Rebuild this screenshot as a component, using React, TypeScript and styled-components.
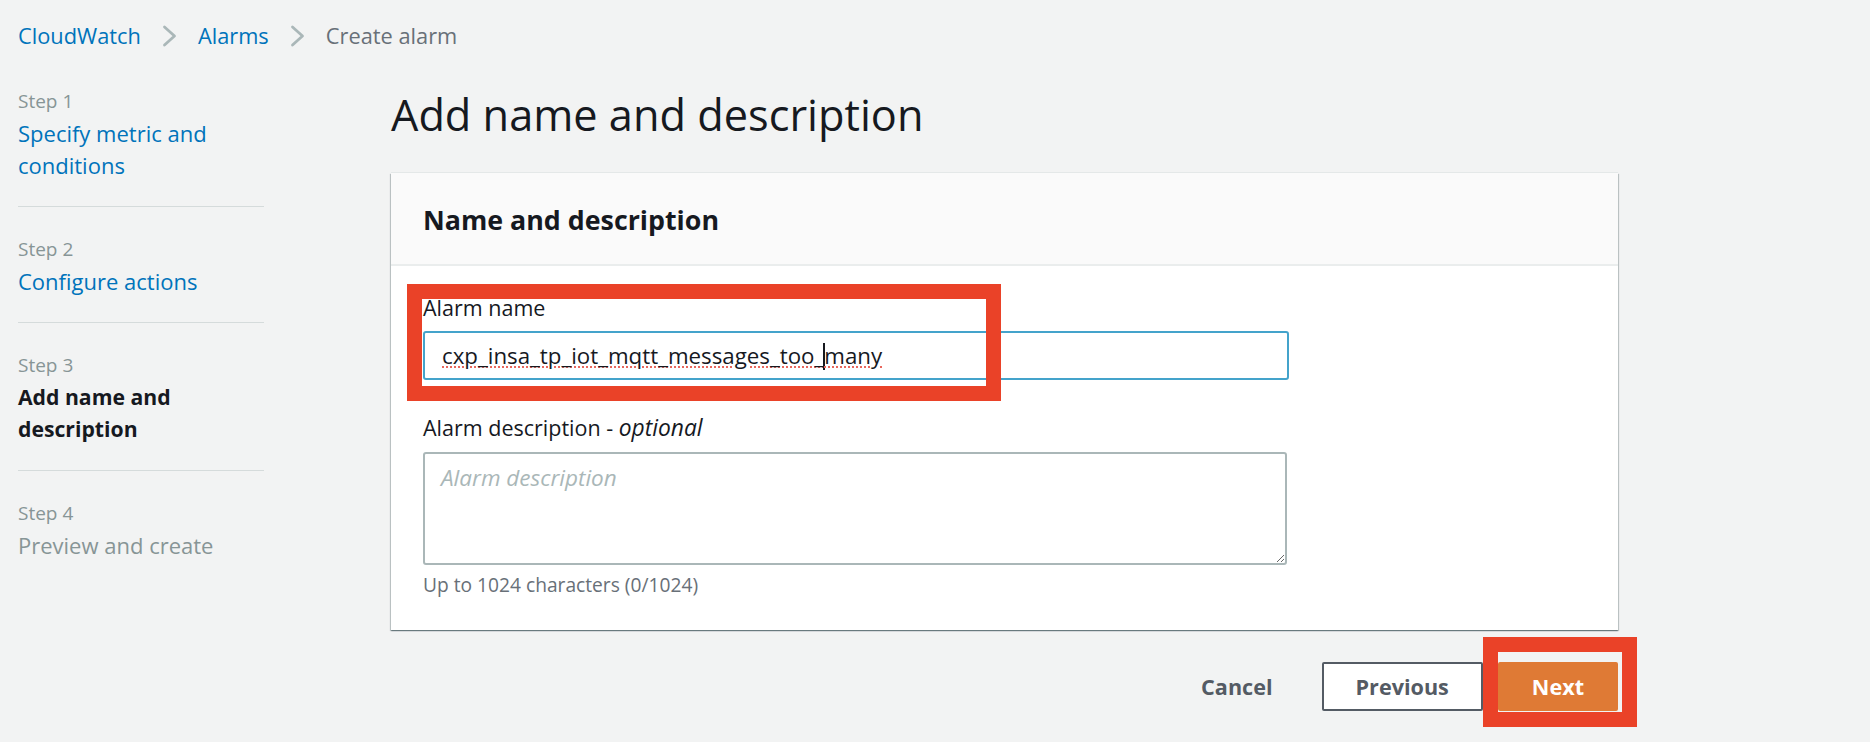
import React from "react";
import styled, { createGlobalStyle } from "styled-components";

const GlobalStyle = createGlobalStyle`
  html, body { margin: 0; padding: 0; background: #f2f3f3; }
  body { font-family: "Open Sans", "Noto Sans", Arial, sans-serif; color: #16191f; }
  * { box-sizing: border-box; }
`;

const Page = styled.div`
  width: 1870px;
  height: 742px;
  overflow: hidden;
  background: #f2f3f3;
  padding: 20px 18px 0;
`;

const Breadcrumbs = styled.nav`
  display: flex;
  align-items: center;
  gap: 21px;
  height: 32px;
  font-size: 21.8px;
  line-height: 32px;
`;

const Crumb = styled.a<{ $current?: boolean }>`
  color: ${(p) => (p.$current ? "#687078" : "#0073bb")};
  text-decoration: none;
`;

const Chevron = () => (
  <svg width="15" height="22" viewBox="0 0 15 22" fill="none">
    <path d="M2.5 2 L12.5 11 L2.5 20" stroke="#aab7b8" strokeWidth="2.8" strokeLinecap="round" strokeLinejoin="round" />
  </svg>
);

const Layout = styled.div`
  display: flex;
  align-items: flex-start;
`;

const Sidebar = styled.nav`
  width: 246px;
  flex: none;
  margin-top: 7px;
`;

const StepBlock = styled.div<{ $last?: boolean }>`
  padding: 30px 0 25px;
  border-bottom: ${(p) => (p.$last ? "none" : "1px solid #d5dbdb")};
`;

const StepLabel = styled.div`
  font-size: 19px;
  line-height: 24px;
  color: #879596;
  margin-bottom: 4px;
`;

const StepTitle = styled.div<{ $state: "link" | "current" | "disabled" }>`
  font-size: ${(p) => (p.$state === "current" ? "21.2px" : "22px")};
  line-height: 32px;
  font-weight: ${(p) => (p.$state === "current" ? 700 : 400)};
  color: ${(p) =>
    p.$state === "link" ? "#0073bb" : p.$state === "current" ? "#16191f" : "#879596"};
`;

const Main = styled.main`
  margin-left: 127px;
  width: 1227px;
  flex: none;
`;

const Title = styled.h1`
  margin: 35px 0 30px;
  font-size: 43.3px;
  line-height: 56px;
  font-weight: 400;
  color: #16191f;
`;

const Card = styled.section`
  background: #ffffff;
  box-shadow: 0 1px 1px 0 rgba(0, 28, 36, 0.35), 1px 1px 1px 0 rgba(0, 28, 36, 0.18),
    -1px 1px 1px 0 rgba(0, 28, 36, 0.18), 0 -1px 0 0 #e4e8e8;
`;

const CardHeader = styled.header`
  background: #fafafa;
  border-bottom: 2px solid #eaeded;
  padding: 30px 32px 27px;
`;

const CardTitle = styled.h2`
  margin: 0;
  font-size: 26.8px;
  line-height: 34px;
  font-weight: 700;
  color: #16191f;
`;

const CardBody = styled.div`
  padding: 27px 32px 33px;
`;

const Field = styled.div<{ $spaced?: boolean }>`
  position: relative;
  margin-top: ${(p) => (p.$spaced ? "33px" : "0")};
`;

const Label = styled.label`
  display: block;
  font-size: 21.5px;
  line-height: 30px;
  color: #16191f;
`;

const Optional = styled.i`
  font-style: italic;
  font-size: 22.8px;
`;

const TextBox = styled.div`
  margin-top: 8px;
  width: 866px;
  height: 49px;
  border: 2px solid #44a3cb;
  border-radius: 3px;
  background: #fff;
  padding: 0 17px;
  display: flex;
  align-items: center;
  font-size: 22.3px;
  line-height: 30px;
  color: #16191f;
  white-space: nowrap;
`;

const Misspelled = styled.span`
  text-decoration: underline dotted #e8675d;
  text-decoration-thickness: 2px;
  text-underline-offset: 3px;
`;

const Caret = styled.span`
  display: inline-block;
  width: 2px;
  height: 27px;
  background: #16191f;
  vertical-align: -6px;
  margin: 0 -1px;
`;

const TextArea = styled.textarea`
  display: block;
  margin-top: 9px;
  width: 864px;
  height: 113px;
  border: 2px solid #aab7b8;
  border-radius: 3px;
  padding: 9px 16px;
  font-family: inherit;
  font-size: 22.5px;
  line-height: 30px;
  color: #16191f;
  resize: vertical;
  outline: none;
  &::placeholder {
    color: #aab7b8;
    font-style: italic;
  }
`;

const Hint = styled.div`
  margin-top: 7px;
  font-size: 19.2px;
  line-height: 25px;
  color: #687078;
`;

const FieldHighlight = styled.div`
  position: absolute;
  left: -16px;
  top: -9px;
  width: 594px;
  height: 117px;
  border: 15px solid #ea4228;
  pointer-events: none;
  z-index: 2;
`;

const Actions = styled.div`
  display: flex;
  justify-content: flex-end;
  align-items: center;
  gap: 15px;
  margin-top: 32px;
`;

const Button = styled.button<{ $variant: "link" | "normal" | "primary" }>`
  height: 49px;
  padding: 0 32px;
  border-radius: 2px;
  font-family: inherit;
  font-size: 21.6px;
  font-weight: 700;
  line-height: 30px;
  cursor: pointer;
  border: 2px solid
    ${(p) => (p.$variant === "normal" ? "#545b64" : p.$variant === "primary" ? "#df7a35" : "transparent")};
  background: ${(p) => (p.$variant === "primary" ? "#df7a35" : p.$variant === "normal" ? "#ffffff" : "transparent")};
  color: ${(p) => (p.$variant === "primary" ? "#ffffff" : "#545b64")};
`;

const NextWrap = styled.div`
  position: relative;
  display: flex;
`;

const ButtonHighlight = styled.div`
  position: absolute;
  left: -15px;
  right: -19px;
  top: -25px;
  bottom: -16px;
  border: 15px solid #ea4228;
  pointer-events: none;
`;

export default function App() {
  return (
    <>
      <GlobalStyle />
      <Page>
        <Breadcrumbs>
          <Crumb href="#">CloudWatch</Crumb>
          <Chevron />
          <Crumb href="#">Alarms</Crumb>
          <Chevron />
          <Crumb $current>Create alarm</Crumb>
        </Breadcrumbs>
        <Layout>
          <Sidebar>
            <StepBlock>
              <StepLabel>Step 1</StepLabel>
              <StepTitle $state="link">Specify metric and conditions</StepTitle>
            </StepBlock>
            <StepBlock>
              <StepLabel>Step 2</StepLabel>
              <StepTitle $state="link">Configure actions</StepTitle>
            </StepBlock>
            <StepBlock>
              <StepLabel>Step 3</StepLabel>
              <StepTitle $state="current">Add name and description</StepTitle>
            </StepBlock>
            <StepBlock $last>
              <StepLabel>Step 4</StepLabel>
              <StepTitle $state="disabled">Preview and create</StepTitle>
            </StepBlock>
          </Sidebar>
          <Main>
            <Title>Add name and description</Title>
            <Card>
              <CardHeader>
                <CardTitle>Name and description</CardTitle>
              </CardHeader>
              <CardBody>
                <Field>
                  <Label>Alarm name</Label>
                  <TextBox role="textbox">
                    <Misspelled>
                      cxp_insa_tp_iot_mqtt_messages_too_<Caret />many
                    </Misspelled>
                  </TextBox>
                  <FieldHighlight />
                </Field>
                <Field $spaced>
                  <Label>
                    Alarm description - <Optional>optional</Optional>
                  </Label>
                  <TextArea placeholder="Alarm description" />
                  <Hint>Up to 1024 characters (0/1024)</Hint>
                </Field>
              </CardBody>
            </Card>
            <Actions>
              <Button $variant="link">Cancel</Button>
              <Button $variant="normal">Previous</Button>
              <NextWrap>
                <Button $variant="primary">Next</Button>
                <ButtonHighlight />
              </NextWrap>
            </Actions>
          </Main>
        </Layout>
      </Page>
    </>
  );
}
